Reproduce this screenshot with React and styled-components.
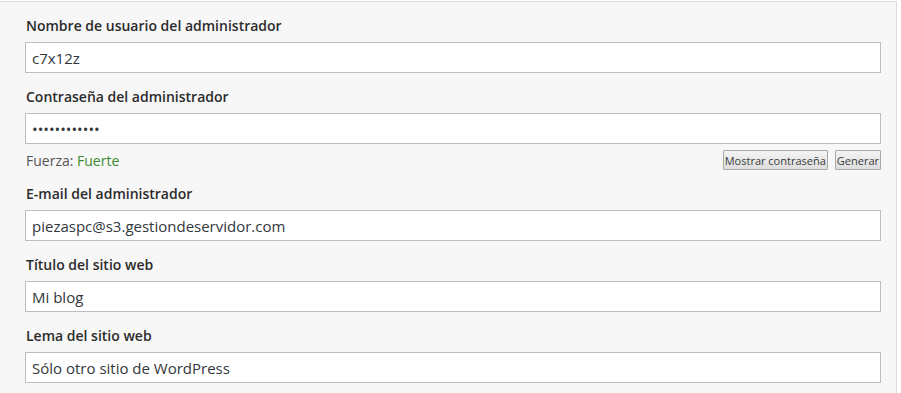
import styled, { createGlobalStyle } from "styled-components";

const GlobalStyle = createGlobalStyle`
  html, body {
    margin: 0;
    padding: 0;
    background: #ffffff;
  }
  body {
    font-family: "Open Sans", "Liberation Sans", sans-serif;
  }
`;

const Panel = styled.section`
  box-sizing: border-box;
  width: 897px;
  height: 393px;
  margin-top: 1px;
  padding: 14px 15px 0 25px;
  background: #f7f7f7;
  border-top: 1px solid #dcdcdc;
  border-right: 1px solid #dcdcdc;
  display: flex;
  flex-direction: column;
  gap: 14px;
  overflow: hidden;
`;

const Field = styled.div`
  display: flex;
  flex-direction: column;
`;

const Label = styled.label`
  font-size: 14px;
  font-weight: 600;
  line-height: 19px;
  color: #2b2b2b;
  margin-bottom: 7px;
  padding-left: 1px;
`;

const Input = styled.input`
  box-sizing: border-box;
  width: 100%;
  height: 31px;
  margin: 0;
  padding: 0 6px;
  border: 1px solid #bdbdbd;
  background: #ffffff;
  font-family: "Open Sans", "Liberation Sans", sans-serif;
  font-size: 15px;
  color: #32373c;
  outline: none;
`;

const Strength = styled.div`
  display: flex;
  align-items: center;
  justify-content: space-between;
  margin-top: 6px;
  height: 20px;
`;

const StrengthText = styled.span`
  font-size: 14px;
  color: #555555;
  padding-left: 1px;
`;

const Good = styled.span`
  color: #3b8a2f;
`;

const Buttons = styled.div`
  display: flex;
  gap: 7px;
`;

const SmallButton = styled.button`
  box-sizing: border-box;
  height: 20px;
  margin: 0;
  padding: 0 1px;
  border: 1px solid #a8a8a8;
  border-radius: 1px;
  background: linear-gradient(#f4f4f4, #dedede);
  font-family: "Open Sans", "Liberation Sans", sans-serif;
  font-size: 11px;
  color: #3a3a3a;
  cursor: pointer;
`;

const fields = [
  { label: "Nombre de usuario del administrador", value: "c7x12z" },
  { label: "Contraseña del administrador", value: "abcdefghijkl", password: true },
  { label: "E-mail del administrador", value: "piezaspc@s3.gestiondeservidor.com" },
  { label: "Título del sitio web", value: "Mi blog" },
  { label: "Lema del sitio web", value: "Sólo otro sitio de WordPress" },
];

export default function App() {
  return (
    <>
      <GlobalStyle />
      <Panel>
        {fields.map((f) => (
          <Field key={f.label}>
            <Label>{f.label}</Label>
            <Input
              type={f.password ? "password" : "text"}
              defaultValue={f.value}
              readOnly
            />
            {f.password && (
              <Strength>
                <StrengthText>
                  Fuerza: <Good>Fuerte</Good>
                </StrengthText>
                <Buttons>
                  <SmallButton>Mostrar contraseña</SmallButton>
                  <SmallButton>Generar</SmallButton>
                </Buttons>
              </Strength>
            )}
          </Field>
        ))}
      </Panel>
    </>
  );
}
